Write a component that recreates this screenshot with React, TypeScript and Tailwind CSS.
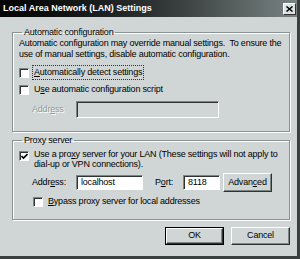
import React from "react";

const font = "font-['Liberation_Sans',Arial,sans-serif]";

const Box = ({ checked }: { checked?: boolean }) => (
  <span className="w-[10px] h-[10px] shrink-0 bg-white border border-t-[#7d8585] border-l-[#7d8585] border-r-white border-b-white shadow-[inset_1px_1px_0_#2f3333] flex items-center justify-center">
    {checked && (
      <svg width="7" height="7" viewBox="0 0 7 7">
        <path d="M0.5 3 L2.5 5 L6.5 1" stroke="#000" strokeWidth="1.6" fill="none" />
      </svg>
    )}
  </span>
);

const Field = ({ value, w, disabled }: { value?: string; w: string; disabled?: boolean }) => (
  <div
    className={`${w} ${disabled ? "h-[17px] bg-[#d0d6d5]" : "h-[15px] bg-white"} border border-t-[#7d8585] border-l-[#7d8585] border-r-white border-b-white shadow-[inset_1px_1px_0_#2f3333] pl-[4px] flex items-center`}
  >
    {value}
  </div>
);

const Btn = ({ label, def }: { label: React.ReactNode; def?: boolean }) => (
  <div className={`${def ? "border border-black" : ""} w-full h-full flex`}>
    <div className="flex-1 flex items-center justify-center bg-[#d0d6d5] border border-t-white border-l-white border-r-[#2f3333] border-b-[#2f3333] shadow-[inset_-1px_-1px_0_#7d8585]">
      {label}
    </div>
  </div>
);

export default function App() {
  return (
    <div className={`${font} w-[300px] h-[259px] bg-[#d0d6d5] text-[9px] tracking-[-0.2px] text-black flex flex-col border-r-[3px] border-b-[3px] border-r-[#3a3f3f] border-b-[#3a3f3f] overflow-hidden`}>
      {/* title bar */}
      <div className="h-[17px] shrink-0 flex items-center justify-between pl-[3px] pr-[1px] bg-gradient-to-r from-[#030303] via-[#2b3030] to-[#7a8484]">
        <span className="text-white font-bold text-[9px] tracking-normal">Local Area Network (LAN) Settings</span>
        <div className="w-[13px] h-[12px] bg-[#dde2e2] border border-t-white border-l-white border-r-[#2f3333] border-b-[#2f3333] flex items-center justify-center">
          <svg width="7" height="6" viewBox="0 0 7 6">
            <path d="M0.5 0.5 L6.5 5.5 M6.5 0.5 L0.5 5.5" stroke="#000" strokeWidth="1.5" />
          </svg>
        </div>
      </div>

      <div className="pt-[10px] pl-[12px] flex flex-col">
        {/* Automatic configuration */}
        <fieldset className="w-[278px] border border-[#8a9393] shadow-[inset_1px_1px_0_#fff,1px_1px_0_#fff] pl-[6px] pr-[4px] pb-[13px]">
          <legend className="ml-[3px] px-[2px] leading-[11px]">Automatic configuration</legend>
          <p className="leading-[11px]">
            Automatic configuration may override manual settings.&nbsp; To ensure the
            <br />
            use of manual settings, disable automatic configuration.
          </p>
          <div className="h-[13px] mt-[6px] flex items-center gap-[4px]">
            <Box />
            <span className="px-[1px] outline outline-1 outline-dotted outline-[#333]">
              <u>A</u>utomatically detect settings
            </span>
          </div>
          <div className="h-[13px] mt-[4px] flex items-center gap-[5px]">
            <Box />
            <span>
              U<u>s</u>e automatic configuration script
            </span>
          </div>
          <div className="mt-[5px] flex items-center">
            <span className="ml-[13px] w-[44px] text-[#8f9999] [text-shadow:1px_1px_0_#fff]">
              Addr<u>e</u>ss
            </span>
            <Field w="w-[143px]" disabled />
          </div>
        </fieldset>

        {/* Proxy server */}
        <fieldset className="w-[278px] mt-[3px] border border-[#8a9393] shadow-[inset_1px_1px_0_#fff,1px_1px_0_#fff] pl-[6px] pr-[4px] pb-[11px]">
          <legend className="ml-[3px] px-[2px] leading-[11px]">Proxy server</legend>
          <div className="mt-[3px] flex items-start gap-[5px]">
            <span className="mt-[2px]">
              <Box checked />
            </span>
            <p className="leading-[10px]">
              Use a pro<u>x</u>y server for your LAN (These settings will not apply to
              <br />
              dial-up or VPN connections).
            </p>
          </div>
          <div className="mt-[4px] h-[19px] flex items-center">
            <span className="ml-[13px] w-[44px]">
              Addr<u>e</u>ss:
            </span>
            <Field w="w-[67px]" value="localhost" />
            <span className="ml-[12px] w-[28px]">
              P<u>o</u>rt:
            </span>
            <Field w="w-[37px]" value="8118" />
            <div className="ml-[3px] w-[49px] h-[19px] flex">
              <Btn label={<span>Advan<u>c</u>ed</span>} />
            </div>
          </div>
          <div className="mt-[3px] h-[13px] ml-[14px] flex items-center gap-[5px]">
            <Box />
            <span>
              <u>B</u>ypass proxy server for local addresses
            </span>
          </div>
        </fieldset>

        {/* buttons */}
        <div className="mt-[7px] w-[278px] flex justify-end gap-[7px]">
          <div className="w-[59px] h-[18px] flex">
            <Btn label="OK" def />
          </div>
          <div className="w-[59px] h-[18px] flex">
            <Btn label="Cancel" />
          </div>
        </div>
      </div>
    </div>
  );
}
